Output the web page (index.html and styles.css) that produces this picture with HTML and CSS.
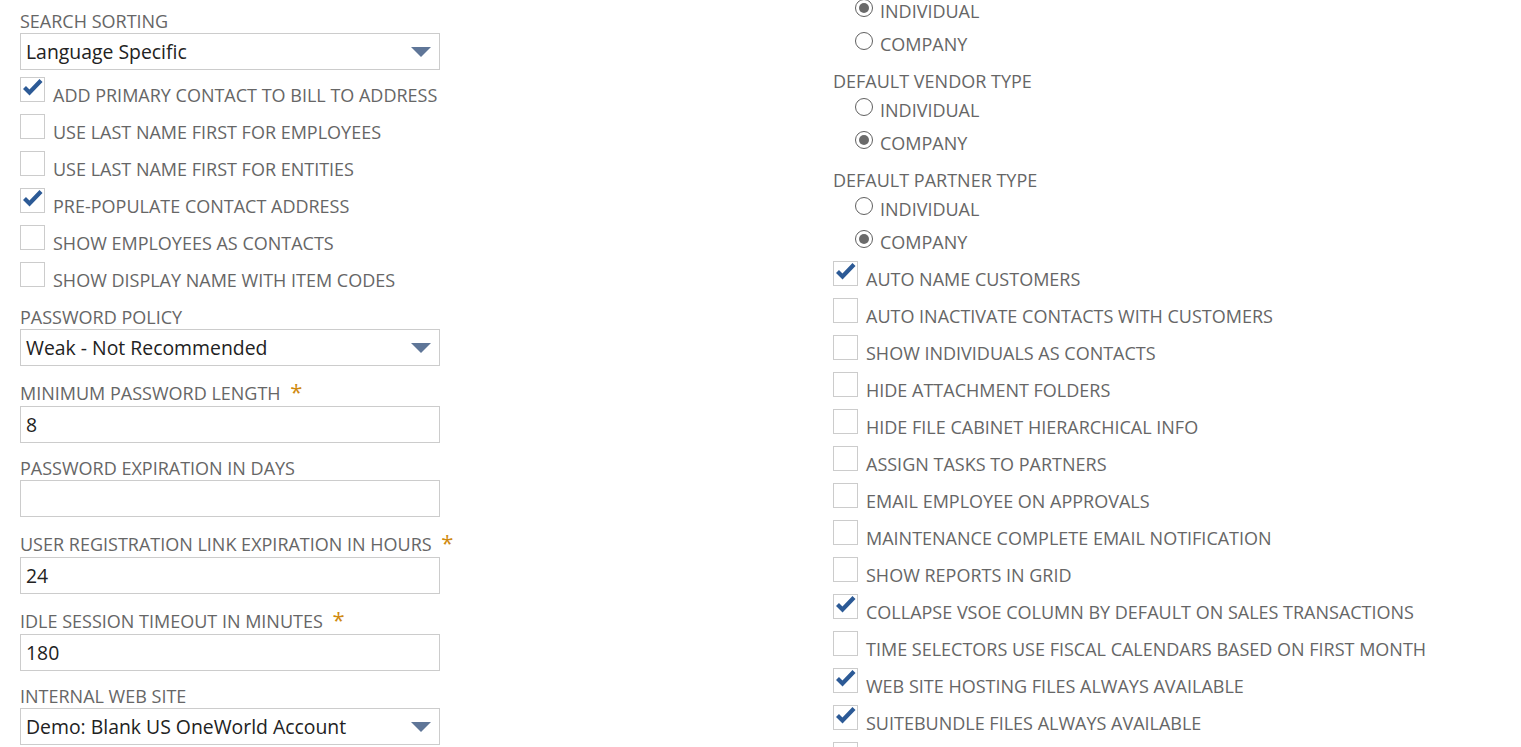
FILE: index.html
```html
<!DOCTYPE html>
<html>
<head>
<meta charset="utf-8">
<link rel="stylesheet" href="styles.css">
</head>
<body>
<div class="page">
  <div class="col left">
    <div class="field first">
      <div class="label">Search Sorting</div>
      <div class="select"><span>Language Specific</span><i class="arrow"></i></div>
    </div>
    <div class="checks">
      <div class="check on"><span class="box"><svg viewBox="0 0 25 25"><path d="M4.5 10.5 L9.5 15.5 L21 3.5" /></svg></span><span class="txt">Add Primary Contact to Bill to Address</span></div>
      <div class="check"><span class="box"></span><span class="txt">Use Last Name First for Employees</span></div>
      <div class="check"><span class="box"></span><span class="txt">Use Last Name First for Entities</span></div>
      <div class="check on"><span class="box"><svg viewBox="0 0 25 25"><path d="M4.5 10.5 L9.5 15.5 L21 3.5" /></svg></span><span class="txt">Pre-populate Contact Address</span></div>
      <div class="check"><span class="box"></span><span class="txt">Show Employees as Contacts</span></div>
      <div class="check"><span class="box"></span><span class="txt">Show Display Name with Item Codes</span></div>
    </div>
    <div class="field after-checks">
      <div class="label">Password Policy</div>
      <div class="select"><span>Weak - Not Recommended</span><i class="arrow"></i></div>
    </div>
    <div class="field req">
      <div class="label">Minimum Password Length <b class="ast">*</b></div>
      <div class="input">8</div>
    </div>
    <div class="field">
      <div class="label">Password Expiration in Days</div>
      <div class="input"></div>
    </div>
    <div class="field req">
      <div class="label">User Registration Link Expiration in Hours <b class="ast">*</b></div>
      <div class="input">24</div>
    </div>
    <div class="field req">
      <div class="label">Idle Session Timeout in Minutes <b class="ast">*</b></div>
      <div class="input">180</div>
    </div>
    <div class="field">
      <div class="label">Internal Web Site</div>
      <div class="select"><span>Demo: Blank US OneWorld Account</span><i class="arrow"></i></div>
    </div>
  </div>

  <div class="col right">
    <div class="radio on"><span class="circ"></span><span class="txt">Individual</span></div>
    <div class="radio"><span class="circ"></span><span class="txt">Company</span></div>

    <div class="label rlabel">Default Vendor Type</div>
    <div class="radio"><span class="circ"></span><span class="txt">Individual</span></div>
    <div class="radio on"><span class="circ"></span><span class="txt">Company</span></div>

    <div class="label rlabel">Default Partner Type</div>
    <div class="radio"><span class="circ"></span><span class="txt">Individual</span></div>
    <div class="radio on"><span class="circ"></span><span class="txt">Company</span></div>

    <div class="checks rchecks">
      <div class="check on"><span class="box"><svg viewBox="0 0 25 25"><path d="M4.5 10.5 L9.5 15.5 L21 3.5" /></svg></span><span class="txt">Auto Name Customers</span></div>
      <div class="check"><span class="box"></span><span class="txt">Auto Inactivate Contacts with Customers</span></div>
      <div class="check"><span class="box"></span><span class="txt">Show Individuals as Contacts</span></div>
      <div class="check"><span class="box"></span><span class="txt">Hide Attachment Folders</span></div>
      <div class="check"><span class="box"></span><span class="txt">Hide File Cabinet Hierarchical Info</span></div>
      <div class="check"><span class="box"></span><span class="txt">Assign Tasks to Partners</span></div>
      <div class="check"><span class="box"></span><span class="txt">Email Employee on Approvals</span></div>
      <div class="check"><span class="box"></span><span class="txt">Maintenance Complete Email Notification</span></div>
      <div class="check"><span class="box"></span><span class="txt">Show Reports in Grid</span></div>
      <div class="check on"><span class="box"><svg viewBox="0 0 25 25"><path d="M4.5 10.5 L9.5 15.5 L21 3.5" /></svg></span><span class="txt">Collapse VSOE Column by Default on Sales Transactions</span></div>
      <div class="check"><span class="box"></span><span class="txt">Time Selectors Use Fiscal Calendars Based on First Month</span></div>
      <div class="check on"><span class="box"><svg viewBox="0 0 25 25"><path d="M4.5 10.5 L9.5 15.5 L21 3.5" /></svg></span><span class="txt">Web Site Hosting Files Always Available</span></div>
      <div class="check on"><span class="box"><svg viewBox="0 0 25 25"><path d="M4.5 10.5 L9.5 15.5 L21 3.5" /></svg></span><span class="txt">SuiteBundle Files Always Available</span></div>
      <div class="check"><span class="box"></span><span class="txt"></span></div>
    </div>
  </div>
</div>
</body>
</html>
```

FILE: styles.css
```css
html, body {
  margin: 0;
  padding: 0;
  background: #ffffff;
  height: 747px;
  overflow: hidden;
}
body {
  font-family: "Open Sans", "Liberation Sans", sans-serif;
  color: #666666;
}
.page {
  display: grid;
  grid-template-columns: 813px 1fr;
  padding-left: 20px;
}
.col {
  display: flex;
  flex-direction: column;
}
.left {
  width: 420px;
  padding-top: 9px;
}
.right {
  margin-top: -6px;
}
.label {
  font-size: 18px;
  line-height: 24px;
  height: 24px;
  text-transform: uppercase;
  color: #666666;
  white-space: nowrap;
}
.field {
  margin-top: 13px;
}
.field.first {
  margin-top: 0;
}
.field.after-checks {
  margin-top: 6px;
}
.field.req {
  margin-top: 15px;
}
.field.req .label {
  height: 25px;
  line-height: 21px;
}
.ast {
  color: #d08a10;
  font-weight: normal;
  font-size: 22px;
  line-height: 21px;
  margin-left: 5px;
}
.select, .input {
  box-sizing: border-box;
  height: 37px;
  border: 1px solid #cccccc;
  background: #ffffff;
  font-size: 19.4px;
  line-height: 35px;
  color: #222222;
  padding-left: 5px;
  display: flex;
  align-items: center;
  justify-content: space-between;
}
.arrow {
  width: 0;
  height: 0;
  border-left: 10px solid transparent;
  border-right: 10px solid transparent;
  border-top: 10px solid #5f7698;
  margin-right: 8px;
  margin-top: 1px;
}
.checks {
  margin-top: 7px;
  display: flex;
  flex-direction: column;
}
.rchecks {
  margin-top: 3px;
}
.check {
  height: 37px;
  display: flex;
  align-items: flex-start;
}
.box {
  box-sizing: border-box;
  width: 25px;
  height: 25px;
  border: 1px solid #cccccc;
  background: #ffffff;
  flex: none;
  display: block;
}
.box svg {
  display: block;
  width: 25px;
  height: 25px;
  margin: -1px;
}
.box path {
  fill: none;
  stroke: #2c5a96;
  stroke-width: 4.2;
  stroke-linejoin: miter;
  stroke-linecap: butt;
}
.check .txt {
  margin-top: 6px;
  margin-left: 8px;
  font-size: 18px;
  line-height: 24px;
  text-transform: uppercase;
  color: #666666;
  white-space: nowrap;
}
.radio {
  height: 33px;
  display: flex;
  align-items: flex-start;
  padding-left: 22px;
}
.circ {
  box-sizing: border-box;
  width: 18px;
  height: 18px;
  border: 1.5px solid #606060;
  border-radius: 50%;
  margin-top: 5px;
  flex: none;
  display: flex;
  align-items: center;
  justify-content: center;
}
.radio.on .circ::after {
  content: "";
  width: 10px;
  height: 10px;
  border-radius: 50%;
  background: #6a6a6a;
}
.radio .txt {
  margin-left: 7px;
  margin-top: 5px;
  font-size: 18px;
  line-height: 24px;
  text-transform: uppercase;
  color: #666666;
  white-space: nowrap;
}
.rlabel {
  margin-top: 9px;
}
```
